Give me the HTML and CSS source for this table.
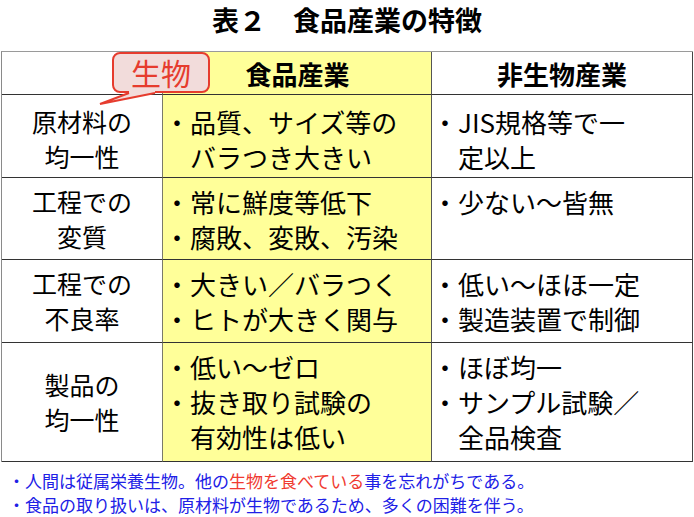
FILE: index.html
```html
<!DOCTYPE html>
<html lang="ja">
<head>
<meta charset="utf-8">
<title>表２ 食品産業の特徴</title>
<link rel="stylesheet" href="styles.css">
</head>
<body>
<div class="page">
  <h1 class="title">表２　食品産業の特徴</h1>
  <div class="table">
    <div class="cell head c1"></div>
    <div class="cell head c2">食品産業</div>
    <div class="cell head c3">非生物産業</div>

    <div class="cell c1 first"><p>原材料の</p><p>均一性</p></div>
    <div class="cell c2 first"><p class="item">・品質、サイズ等の<br>バラつき大きい</p></div>
    <div class="cell c3 first"><p class="item">・JIS規格等で一<br>定以上</p></div>

    <div class="cell c1"><p>工程での</p><p>変質</p></div>
    <div class="cell c2"><p class="item">・常に鮮度等低下</p><p class="item">・腐敗、変敗、汚染</p></div>
    <div class="cell c3"><p class="item">・少ない～皆無</p></div>

    <div class="cell c1"><p>工程での</p><p>不良率</p></div>
    <div class="cell c2"><p class="item">・大きい／バラつく</p><p class="item">・ヒトが大きく関与</p></div>
    <div class="cell c3"><p class="item">・低い～ほほ一定</p><p class="item">・製造装置で制御</p></div>

    <div class="cell c1 mid"><p>製品の</p><p>均一性</p></div>
    <div class="cell c2"><p class="item">・低い～ゼロ</p><p class="item">・抜き取り試験の<br>有効性は低い</p></div>
    <div class="cell c3"><p class="item">・ほぼ均一</p><p class="item">・サンプル試験／<br>全品検査</p></div>
  </div>

  <div class="callout">生物</div>
  <svg class="tail" width="64" height="22" viewBox="0 0 64 22">
    <polygon points="33,4.5 59,4.5 59,7.5 4,18 33,7.5" fill="#f2dcdb"/>
    <polyline points="33,7 4,18 59,7" fill="none" stroke="#e63c2e" stroke-width="2" stroke-linejoin="miter"/>
  </svg>

  <div class="notes">
    <p>・人間は従属栄養生物。他の<span class="red">生物を食べている</span>事を忘れがちである。</p>
    <p>・食品の取り扱いは、原材料が生物であるため、多くの困難を伴う。</p>
  </div>
</div>
</body>
</html>
```
FILE: styles.css
```css
body {
  margin: 0;
  font-family: "Noto Sans CJK JP", "Noto Sans", sans-serif;
  color: #000;
  background: #fff;
}

.page {
  position: relative;
  width: 694px;
  height: 517px;
  overflow: hidden;
}

.title {
  margin: 0;
  height: 51px;
  font-size: 27px;
  font-weight: bold;
  line-height: 40px;
  text-align: center;
}

.table {
  display: grid;
  grid-template-columns: 161px 269px 261px;
  grid-template-rows: 43px 83px 82px 83px 119px;
  margin-left: 1px;
  width: 692px;
  box-sizing: border-box;
  border-top: 1px solid #9a9a9a;
  border-left: 1px solid #8a8a8a;
}

.cell {
  box-sizing: border-box;
  border-bottom: 1px solid #333;
  border-right: 1px solid #555;
  padding-top: 6px;
  font-size: 26px;
  line-height: 35px;
}

.cell p {
  margin: 0;
  white-space: nowrap;
}

.cell.first {
  padding-top: 9px;
}

.c1 {
  text-align: center;
  font-size: 25px;
  border-right-color: #7a7a6a;
}

.c2 {
  background: #ffff99;
  padding-left: 1px;
}

.c3 {
  border-right-color: #444;
}

.head {
  display: flex;
  align-items: center;
  justify-content: center;
  padding-top: 0;
  font-size: 26px;
  font-weight: bold;
}

.c1.mid {
  display: flex;
  flex-direction: column;
  justify-content: center;
  padding-top: 0;
}

.item {
  padding-left: 1em;
  text-indent: -1em;
}

.callout {
  position: absolute;
  left: 112px;
  top: 52px;
  width: 98px;
  height: 41px;
  box-sizing: border-box;
  border: 2px solid #e63c2e;
  border-radius: 8px;
  background: #f2dcdb;
  color: #e63c2e;
  font-size: 30px;
  line-height: 37px;
  text-align: center;
}

.tail {
  position: absolute;
  left: 96px;
  top: 86px;
}

.notes {
  padding: 7px 0 0 8px;
  color: #2020e6;
  font-size: 17px;
  line-height: 24px;
}

.notes p {
  margin: 0;
  white-space: nowrap;
}

.red {
  color: #f03a30;
}
```
